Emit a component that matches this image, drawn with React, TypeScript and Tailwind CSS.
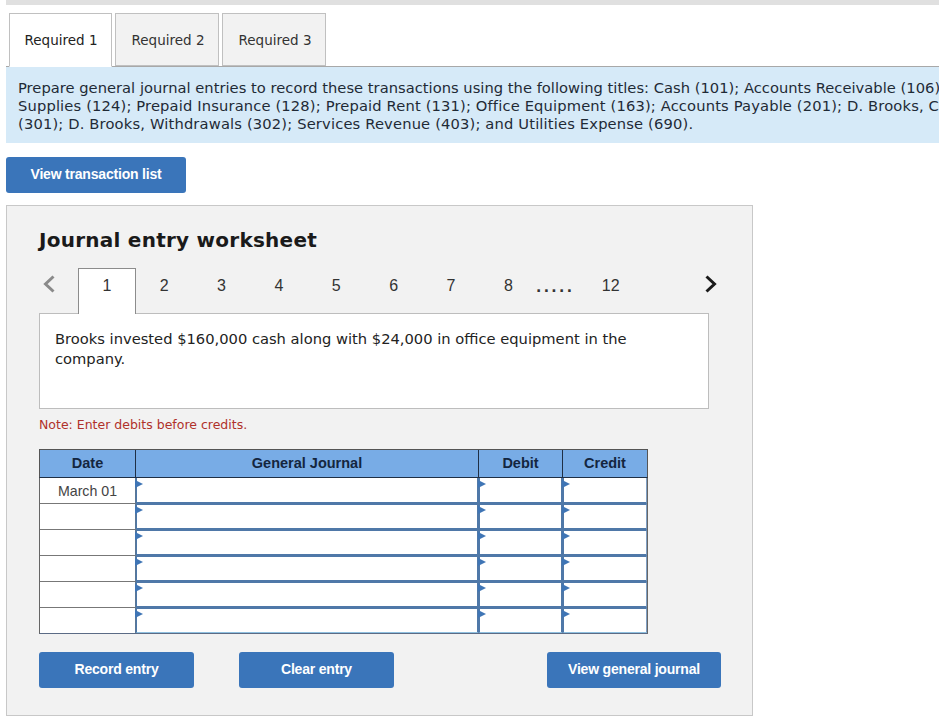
const verdana = "font-['DejaVu_Sans',Verdana,sans-serif]";
const arial = "font-['Liberation_Sans',Arial,sans-serif]";

const tabs = ["Required 1", "Required 2", "Required 3"];
const pages = ["2", "3", "4", "5", "6", "7", "8"];
const rows = ["March 01", "", "", "", "", ""];

function BlueButton({ label, className }: { label: string; className: string }) {
	return (
		<button
			className={`h-9 rounded-[3px] bg-[#3a75ba] pb-0.5 text-sm font-bold tracking-[-0.2px] text-white ${arial} ${className}`}
		>
			{label}
		</button>
	);
}

function EntryCell({ first, last, className }: { first: boolean; last: boolean; className: string }) {
	return (
		<div
			className={`relative bg-white ${first ? "" : "border-t border-t-[#4f78a8]"} ${
				last ? "h-[25px] border-b border-b-[#8fc0e0]" : "h-[26px] border-b-2 border-b-[#4f78a8]"
			} ${className}`}
		>
			<span
				className={`absolute -left-[2px] z-10 h-0 w-0 border-y-4 border-l-8 border-y-transparent border-l-[#3f75b5] ${
					first ? "top-[2px]" : "top-px"
				}`}
			/>
		</div>
	);
}

export default function App() {
	return (
		<div className={`h-[727px] w-[939px] overflow-hidden bg-white pl-[6px] text-[#222] ${verdana}`}>
			<div className="h-[5px] bg-[#e0e0e0]" />

			{/* Tabs */}
			<div className="mt-2 flex h-[54px] gap-[3px] border-b border-[#a8a8a8] pl-[3px] text-[13.5px]">
				{tabs.map((tab, i) => (
					<div
						key={tab}
						className={`flex items-center justify-center border border-[#c0c0c0] ${
							i === 0
								? "-mb-px w-[103px] border-[#a0a0a0] border-b-white bg-white pl-px"
								: "w-[104px] bg-[#f2f2f2] pl-[2px] pt-0.5 text-[#333]"
						}`}
					>
						{tab}
					</div>
				))}
			</div>

			{/* Instructions */}
			<div className="h-[76px] overflow-hidden whitespace-nowrap bg-[#d6eaf8] pl-3 pt-3 text-[14.7px] leading-[18px] text-[#1f2a36]">
				<div className="tracking-[0.02px]">Prepare general journal entries to record these transactions using the following titles: Cash (101); Accounts Receivable (106);</div>
				<div className="tracking-[0.15px]">Supplies (124); Prepaid Insurance (128); Prepaid Rent (131); Office Equipment (163); Accounts Payable (201); D. Brooks, Capital</div>
				<div className="tracking-[0.16px]">(301); D. Brooks, Withdrawals (302); Services Revenue (403); and Utilities Expense (690).</div>
			</div>

			<BlueButton label="View transaction list" className="mt-[14px] block w-[180px]" />

			{/* Worksheet panel */}
			<div className="mt-3 h-[511px] w-[747px] border border-[#c8c8c8] bg-[#f2f2f2] pl-8 pt-[22px]">
				<h2 className="text-[20px] font-bold leading-6 tracking-[0.25px] text-[#1a1a1a]">Journal entry worksheet</h2>

				<div className={`mt-4 flex h-[46px] w-[690px] items-start text-base text-[#333] ${arial}`}>
					<div className="flex h-[32px] w-[39px] items-center pl-1">
						<svg viewBox="0 0 12 18" className="h-[18px] w-3 text-[#8a8a8a]" fill="none" stroke="currentColor" strokeWidth="3">
							<polyline points="10.5,1.5 2.5,9 10.5,16.5" />
						</svg>
					</div>
					<div className="z-10 flex h-[46px] w-[58px] items-start justify-center border border-b-0 border-[#8c8c8c] bg-white pt-[5px]">
						1
					</div>
					{pages.map((page) => (
						<div key={page} className="flex h-[36px] w-[57.4px] -translate-x-[0.6px] items-center justify-center">
							{page}
						</div>
					))}
					<div className={`flex h-[36px] w-[35px] items-center justify-center pt-0.5 text-[14px] font-bold tracking-[2.4px] ${verdana}`}>.....</div>
					<div className="flex h-[36px] w-[76px] items-center justify-center">12</div>
					<div className="ml-auto flex h-[32px] w-[38px] items-center pl-[14px]">
						<svg viewBox="0 0 12 18" className="h-[18px] w-3 text-[#1a1a1a]" fill="none" stroke="currentColor" strokeWidth="3">
							<polyline points="1.5,1.5 9.5,9 1.5,16.5" />
						</svg>
					</div>
				</div>

				<div className="-mt-px h-[96px] w-[670px] border border-[#bdbdbd] bg-white px-[15px] pt-[15px] text-[14.7px] leading-5 text-[#222]">
					Brooks invested $160,000 cash along with $24,000 in office equipment in the company.
				</div>

				<p className="mt-[9px] text-[12.5px] leading-[14px] text-[#b0312a]">Note: Enter debits before credits.</p>

				{/* Journal table */}
				<div className={`mt-[17px] w-[609px] text-[14.2px] ${arial}`}>
					<div className="grid h-[29px] grid-cols-[96px_343px_84px_84px] border border-[#555] border-b-[#1f2f45] bg-[#78ace6] text-[14.5px] font-bold text-[#14263f]">
						<div className="flex items-center justify-center border-r border-[#1f2f45]">Date</div>
						<div className="flex items-center justify-center border-r border-[#1f2f45]">General Journal</div>
						<div className="flex items-center justify-center border-r border-[#1f2f45]">Debit</div>
						<div className="flex items-center justify-center">Credit</div>
					</div>
					{rows.map((date, i) => {
						const first = i === 0;
						const last = i === rows.length - 1;
						return (
							<div key={i} className={`grid grid-cols-[96px_343px_84px_84px] border-x border-[#666] ${last ? "border-b border-b-[#5b6b85]" : ""}`}>
								<div className={`flex items-center justify-center border-r border-r-[#5a7796] bg-white pt-0.5 text-[#444] ${last ? "h-[25px]" : "h-[26px] border-b border-b-[#777]"}`}>
									{date}
								</div>
								<EntryCell first={first} last={last} className="border-l border-r-2 border-x-[#4f78a8]" />
								<EntryCell first={first} last={last} className="border-l border-r-2 border-x-[#4f78a8]" />
								<EntryCell first={first} last={last} className="border-l border-r border-l-[#4f78a8] border-r-[#7f9fc4]" />
							</div>
						);
					})}
				</div>

				<div className="mt-[18px] flex w-[682px]">
					<BlueButton label="Record entry" className="w-[155px]" />
					<BlueButton label="Clear entry" className="ml-[45px] w-[155px]" />
					<BlueButton label="View general journal" className="ml-auto w-[174px]" />
				</div>
			</div>
		</div>
	);
}
